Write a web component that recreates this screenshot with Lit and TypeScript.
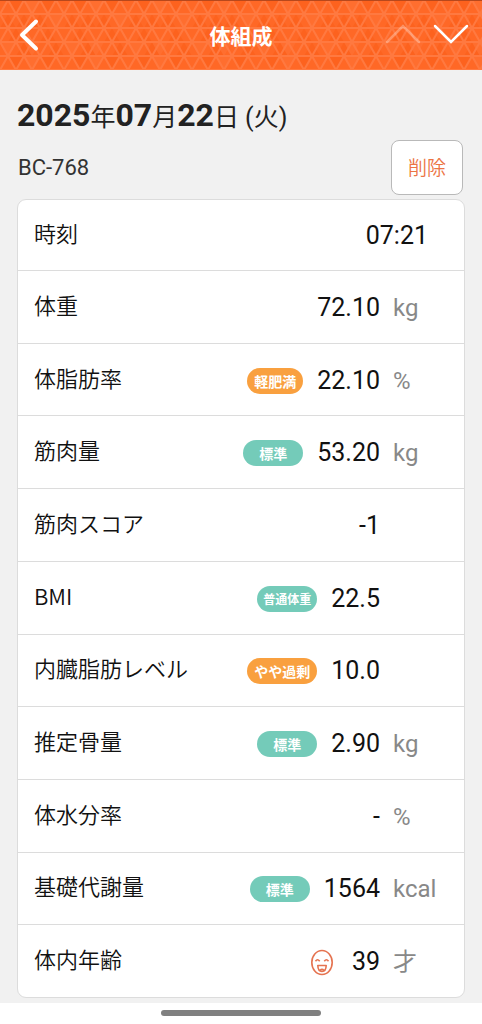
import { LitElement, html, css, svg, nothing } from "lit";
import { customElement, property } from "lit/decorators.js";
import { classMap } from "lit/directives/class-map.js";

interface Badge {
  text: string;
  tone: "good" | "warn";
  size?: "snug" | "small";
}

interface Measurement {
  label: string;
  value: string;
  unit?: string;
  badge?: Badge;
  face?: boolean;
  wide?: boolean;
}

const MEASUREMENTS: Measurement[] = [
  { label: "時刻", value: "07:21", wide: true },
  { label: "体重", value: "72.10", unit: "kg" },
  { label: "体脂肪率", value: "22.10", unit: "%", badge: { text: "軽肥満", tone: "warn", size: "snug" } },
  { label: "筋肉量", value: "53.20", unit: "kg", badge: { text: "標準", tone: "good" } },
  { label: "筋肉スコア", value: "-1" },
  { label: "BMI", value: "22.5", badge: { text: "普通体重", tone: "good", size: "small" } },
  { label: "内臓脂肪レベル", value: "10.0", badge: { text: "やや過剰", tone: "warn", size: "snug" } },
  { label: "推定骨量", value: "2.90", unit: "kg", badge: { text: "標準", tone: "good" } },
  { label: "体水分率", value: "-", unit: "%" },
  { label: "基礎代謝量", value: "1564", unit: "kcal", badge: { text: "標準", tone: "good" } },
  { label: "体内年齢", value: "39", unit: "才", face: true },
];

@customElement("app-header")
class AppHeader extends LitElement {
  static styles = css`
    :host {
      display: block;
      color: #fff;
      font-family: "Noto Sans CJK JP", sans-serif;
    }
    .bar {
      position: relative;
      display: grid;
      grid-template-columns: 1fr auto 1fr;
      align-items: center;
      box-sizing: border-box;
      height: 70px;
      padding: 0 7px 2px;
      border-top: 1px solid #b8481c;
      background: #ff6a28;
    }
    .pattern {
      position: absolute;
      inset: 0;
      width: 100%;
      height: 100%;
    }
    .title {
      position: relative;
      margin: 0;
      font-size: 21px;
      line-height: 32px;
      font-weight: 700;
    }
    .side {
      position: relative;
      display: flex;
    }
    .steps {
      justify-content: flex-end;
    }
    .btn {
      display: flex;
      align-items: center;
      justify-content: center;
      width: 48px;
      height: 48px;
      padding: 0;
      border: 0;
      background: none;
      color: inherit;
    }
    .btn:disabled {
      opacity: 0.3;
    }
    .back {
      width: 44px;
    }
  `;

  render() {
    return html`
      <header class="bar">
        <svg class="pattern" aria-hidden="true">
          <defs>
            <pattern id="tri" width="64" height="56" y="-1" patternUnits="userSpaceOnUse">
              ${svg`
              <rect width="64" height="56" fill="#ff6826" />
              <path fill="#fd621e" d="M8 0h16l-8 14zM40 0h16l-8 14zM0 28l8-14 8 14zM32 28l8-14 8 14zM16 28l8-14 8 14zM40 42l8-14 8 14zM8 42l8-14 8 14zM48 56l8-14 8 14zM16 56l8-14 8 14z" />
              <path fill="#ff6e2f" d="M24 0h16l-8 14zM48 14h16l-8 14zM24 42h16l-8 14zM0 42h16l-8 14z" />
              <path fill="none" stroke="#ff7940" stroke-width="2" d="M0 0H64M0 14H64M0 28H64M0 42H64M0 56H64M-8 0L24 56M8 0L40 56M24 0L56 56M40 0L72 56M56 0L88 56M-24 0L8 56M-8 56L24 0M8 56L40 0M24 56L56 0M40 56L72 0M56 56L88 0M-24 56L8 0" />`}
            </pattern>
          </defs>
          <rect width="100%" height="100%" fill="url(#tri)" />
        </svg>
        <div class="side">
          <button class="btn back" type="button" aria-label="戻る">
            <svg width="22" height="34" viewBox="0 0 22 34" fill="none" stroke="currentColor" stroke-width="4" stroke-linecap="round" stroke-linejoin="round">
              <path d="M18 3.5 4 17l14 13.5" />
            </svg>
          </button>
        </div>
        <h1 class="title">体組成</h1>
        <div class="side steps">
          <button class="btn" type="button" aria-label="前へ" disabled>
            <svg width="36" height="22" viewBox="0 0 36 22" fill="none" stroke="currentColor" stroke-width="2.5" stroke-linecap="round">
              <path d="M2 18 18 2l16 16" />
            </svg>
          </button>
          <button class="btn" type="button" aria-label="次へ">
            <svg width="36" height="22" viewBox="0 0 36 22" fill="none" stroke="currentColor" stroke-width="2.5" stroke-linecap="round">
              <path d="M2 2l16 16L34 2" />
            </svg>
          </button>
        </div>
      </header>
    `;
  }
}

@customElement("measure-table")
class MeasureTable extends LitElement {
  @property({ attribute: false }) items: Measurement[] = [];

  static styles = css`
    :host {
      display: flex;
      flex: 1;
      flex-direction: column;
    }
    .table,
    .body {
      display: flex;
      flex: 1;
      flex-direction: column;
    }
    .table {
      border: 1px solid #dcdcdc;
      border-radius: 9px;
      background: #fff;
    }
    .row {
      display: flex;
      flex: 1;
      align-items: center;
      box-sizing: border-box;
      min-height: 72px;
      padding-left: 16px;
      border-top: 1px solid #dcdcdc;
    }
    .row:first-child {
      flex: none;
      min-height: 70px;
      border-top: 0;
    }
    .label {
      flex: 1;
      padding: 0 0 6px;
      color: #111;
      font-family: "Noto Sans CJK JP", sans-serif;
      font-size: 22px;
      line-height: 32px;
      font-weight: 350;
      text-align: left;
    }
    .reading {
      display: flex;
      align-items: center;
      gap: 14px;
      padding: 2px 0 0;
    }
    .value {
      color: #111;
      font-family: Roboto, sans-serif;
      font-size: 25px;
      line-height: 32px;
    }
    .unit {
      width: 84px;
      padding: 2px 0 0 13px;
      box-sizing: border-box;
      color: #888;
      font-family: Roboto, "Noto Sans CJK JP", sans-serif;
      font-size: 24px;
      line-height: 32px;
    }
    .end {
      width: 36px;
    }
    .badge {
      box-sizing: border-box;
      min-width: 60px;
      padding: 0 8px;
      border-radius: 13px;
      color: #fff;
      font-family: "Noto Sans CJK JP", sans-serif;
      font-size: 14px;
      line-height: 26px;
      font-weight: 700;
      text-align: center;
    }
    .good {
      background: #74cbb9;
    }
    .warn {
      background: #f9a03f;
    }
    .snug {
      min-width: 0;
      padding: 0 7px;
    }
    .small {
      padding: 0 6px;
      font-size: 12px;
    }
    .face {
      display: block;
      margin-right: 4px;
    }
  `;

  private renderBadge(badge: Badge) {
    const classes = {
      badge: true,
      [badge.tone]: true,
      snug: badge.size === "snug",
      small: badge.size === "small",
    };
    return html`<span class=${classMap(classes)}>${badge.text}</span>`;
  }

  private renderFace() {
    return html`
      <svg class="face" width="24" height="27" viewBox="0 0 24 27" fill="none" stroke="#e57350" stroke-width="1.6" role="img" aria-label="笑顔">
        <ellipse cx="12" cy="13.5" rx="10.2" ry="12" />
        <path d="M5.5 12.3q2-3 4.2 0M14.3 12.3q2.200-3 4.200 0" />
        <path d="M7.800 16.500h8.400q-.2 6-4.200 6t-4.200-6zM10 21.500q2-2.200 4 0" stroke-linejoin="round" />
      </svg>
    `;
  }

  render() {
    return html`
      <table class="table">
        <tbody class="body">
          ${this.items.map(
            (m) => html`
              <tr class="row">
                <th class="label" scope="row">${m.label}</th>
                <td class="reading">
                  ${m.badge ? this.renderBadge(m.badge) : nothing}
                  ${m.face ? this.renderFace() : nothing}
                  <span class="value">${m.value}</span>
                </td>
                <td class=${classMap({ unit: true, end: !!m.wide })}>${m.unit ?? nothing}</td>
              </tr>
            `,
          )}
        </tbody>
      </table>
    `;
  }
}

@customElement("app-root")
class AppRoot extends LitElement {
  static styles = css`
    :host {
      display: flex;
      flex-direction: column;
      min-height: 100vh;
      background: #f1f1f1;
      color: #222;
      font-family: Roboto, "Noto Sans CJK JP", sans-serif;
    }
    .content {
      display: flex;
      flex: 1;
      flex-direction: column;
      padding: 24px 17px 5px;
    }
    .date {
      margin: 0;
      font-size: 25px;
      line-height: 42px;
      font-weight: 400;
    }
    .num {
      font-size: 32px;
      font-weight: 700;
    }
    .device {
      display: flex;
      align-items: center;
      justify-content: space-between;
      margin: 1px 2px 4px 1px;
    }
    .model {
      font-size: 22px;
      line-height: 32px;
      color: #333;
    }
    .delete {
      box-sizing: border-box;
      width: 72px;
      height: 55px;
      padding: 0 0 2px;
      border: 1px solid #b9b9b9;
      border-radius: 8px;
      background: #fff;
      color: #ec7444;
      font-family: "Noto Sans CJK JP", sans-serif;
      font-size: 19px;
      font-weight: 350;
    }
    .nav {
      display: flex;
      align-items: center;
      justify-content: center;
      height: 21px;
      background: #fff;
    }
    .handle {
      width: 160px;
      height: 6px;
      margin-bottom: 2px;
      border-radius: 3px;
      background: #808080;
    }
  `;

  render() {
    return html`
      <app-header></app-header>
      <main class="content">
        <h2 class="date"><span class="num">2025</span>年<span class="num">07</span>月<span class="num">22</span>日 (火)</h2>
        <div class="device">
          <span class="model">BC-768</span>
          <button class="delete" type="button">削除</button>
        </div>
        <measure-table .items=${MEASUREMENTS}></measure-table>
      </main>
      <footer class="nav"><span class="handle"></span></footer>
    `;
  }
}
